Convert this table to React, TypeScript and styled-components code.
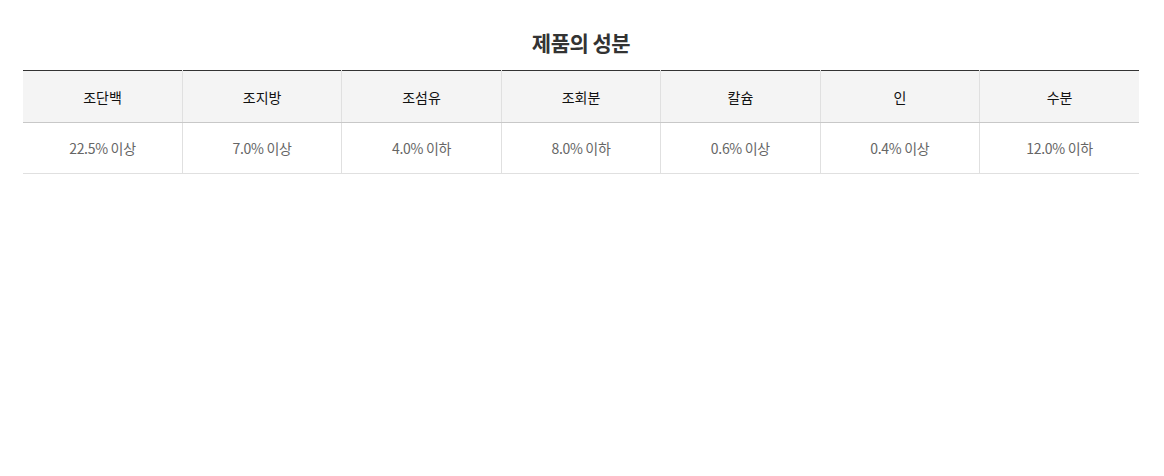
import styled, { createGlobalStyle } from "styled-components";

const GlobalStyle = createGlobalStyle`
  body {
    margin: 0;
    background: #fff;
    font-family: "Noto Sans CJK KR", "Noto Sans", sans-serif;
  }
`;

const Section = styled.section`
  padding: 28px 25px 0 23px;
`;

const Title = styled.h2`
  margin: 0 0 14px;
  font-size: 21px;
  line-height: 28px;
  font-weight: 700;
  color: #333;
  text-align: center;
  letter-spacing: -0.5px;
`;

const Table = styled.table`
  width: 100%;
  border-collapse: collapse;
  table-layout: fixed;
  border-top: 1px solid #333;
`;

const Th = styled.th`
  height: 51px;
  padding: 0;
  background: #f4f4f4;
  border-bottom: 1px solid #c8c8c8;
  border-left: 1px solid #e0e0e0;
  font-size: 14px;
  font-weight: 400;
  color: #111;
  &:first-child {
    border-left: none;
  }
`;

const Td = styled.td`
  height: 50px;
  padding: 0;
  text-align: center;
  border-bottom: 1px solid #e0e0e0;
  border-left: 1px solid #e0e0e0;
  font-size: 14px;
  color: #666;
  letter-spacing: -0.3px;
  &:first-child {
    border-left: none;
  }
`;

const rows = [
  { name: "조단백", value: "22.5% 이상" },
  { name: "조지방", value: "7.0% 이상" },
  { name: "조섬유", value: "4.0% 이하" },
  { name: "조회분", value: "8.0% 이하" },
  { name: "칼슘", value: "0.6% 이상" },
  { name: "인", value: "0.4% 이상" },
  { name: "수분", value: "12.0% 이하" },
];

export default function App() {
  return (
    <>
      <GlobalStyle />
      <Section>
        <Title>제품의 성분</Title>
        <Table>
          <thead>
            <tr>
              {rows.map((r) => (
                <Th key={r.name}>{r.name}</Th>
              ))}
            </tr>
          </thead>
          <tbody>
            <tr>
              {rows.map((r) => (
                <Td key={r.name}>{r.value}</Td>
              ))}
            </tr>
          </tbody>
        </Table>
      </Section>
    </>
  );
}
